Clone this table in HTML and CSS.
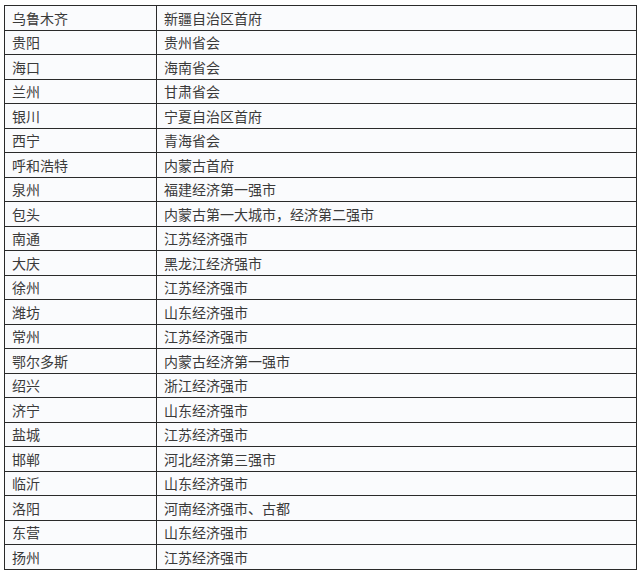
FILE: index.html
```html
<!DOCTYPE html>
<html lang="zh">
<head>
<meta charset="utf-8">
<link rel="stylesheet" href="styles.css">
</head>
<body>
<table class="cities">
<tbody>
<tr><td class="name">乌鲁木齐</td><td>新疆自治区首府</td></tr>
<tr><td class="name">贵阳</td><td>贵州省会</td></tr>
<tr><td class="name">海口</td><td>海南省会</td></tr>
<tr><td class="name">兰州</td><td>甘肃省会</td></tr>
<tr><td class="name">银川</td><td>宁夏自治区首府</td></tr>
<tr><td class="name">西宁</td><td>青海省会</td></tr>
<tr><td class="name">呼和浩特</td><td>内蒙古首府</td></tr>
<tr><td class="name">泉州</td><td>福建经济第一强市</td></tr>
<tr><td class="name">包头</td><td>内蒙古第一大城市，经济第二强市</td></tr>
<tr><td class="name">南通</td><td>江苏经济强市</td></tr>
<tr><td class="name">大庆</td><td>黑龙江经济强市</td></tr>
<tr><td class="name">徐州</td><td>江苏经济强市</td></tr>
<tr><td class="name">潍坊</td><td>山东经济强市</td></tr>
<tr><td class="name">常州</td><td>江苏经济强市</td></tr>
<tr><td class="name">鄂尔多斯</td><td>内蒙古经济第一强市</td></tr>
<tr><td class="name">绍兴</td><td>浙江经济强市</td></tr>
<tr><td class="name">济宁</td><td>山东经济强市</td></tr>
<tr><td class="name">盐城</td><td>江苏经济强市</td></tr>
<tr><td class="name">邯郸</td><td>河北经济第三强市</td></tr>
<tr><td class="name">临沂</td><td>山东经济强市</td></tr>
<tr><td class="name">洛阳</td><td>河南经济强市、古都</td></tr>
<tr><td class="name">东营</td><td>山东经济强市</td></tr>
<tr><td class="name">扬州</td><td>江苏经济强市</td></tr>
</tbody>
</table>
</body>
</html>
```

FILE: styles.css
```css
html, body {
  margin: 0;
  padding: 0;
  background: #ffffff;
}
body {
  padding: 5px 0 0 4px;
  font-family: "Noto Sans CJK SC", "Noto Sans", sans-serif;
  font-size: 14px;
  color: #3a3a3a;
}
.cities {
  border-collapse: collapse;
  width: 633px;
  table-layout: fixed;
  background: #fafbfd;
}
.cities td {
  border: 1px solid #2a2a2a;
  height: 23.5px;
  padding: 0 0 0 7px;
  line-height: 20px;
  vertical-align: middle;
  white-space: nowrap;
}
.cities td.name {
  width: 144px;
}
```
